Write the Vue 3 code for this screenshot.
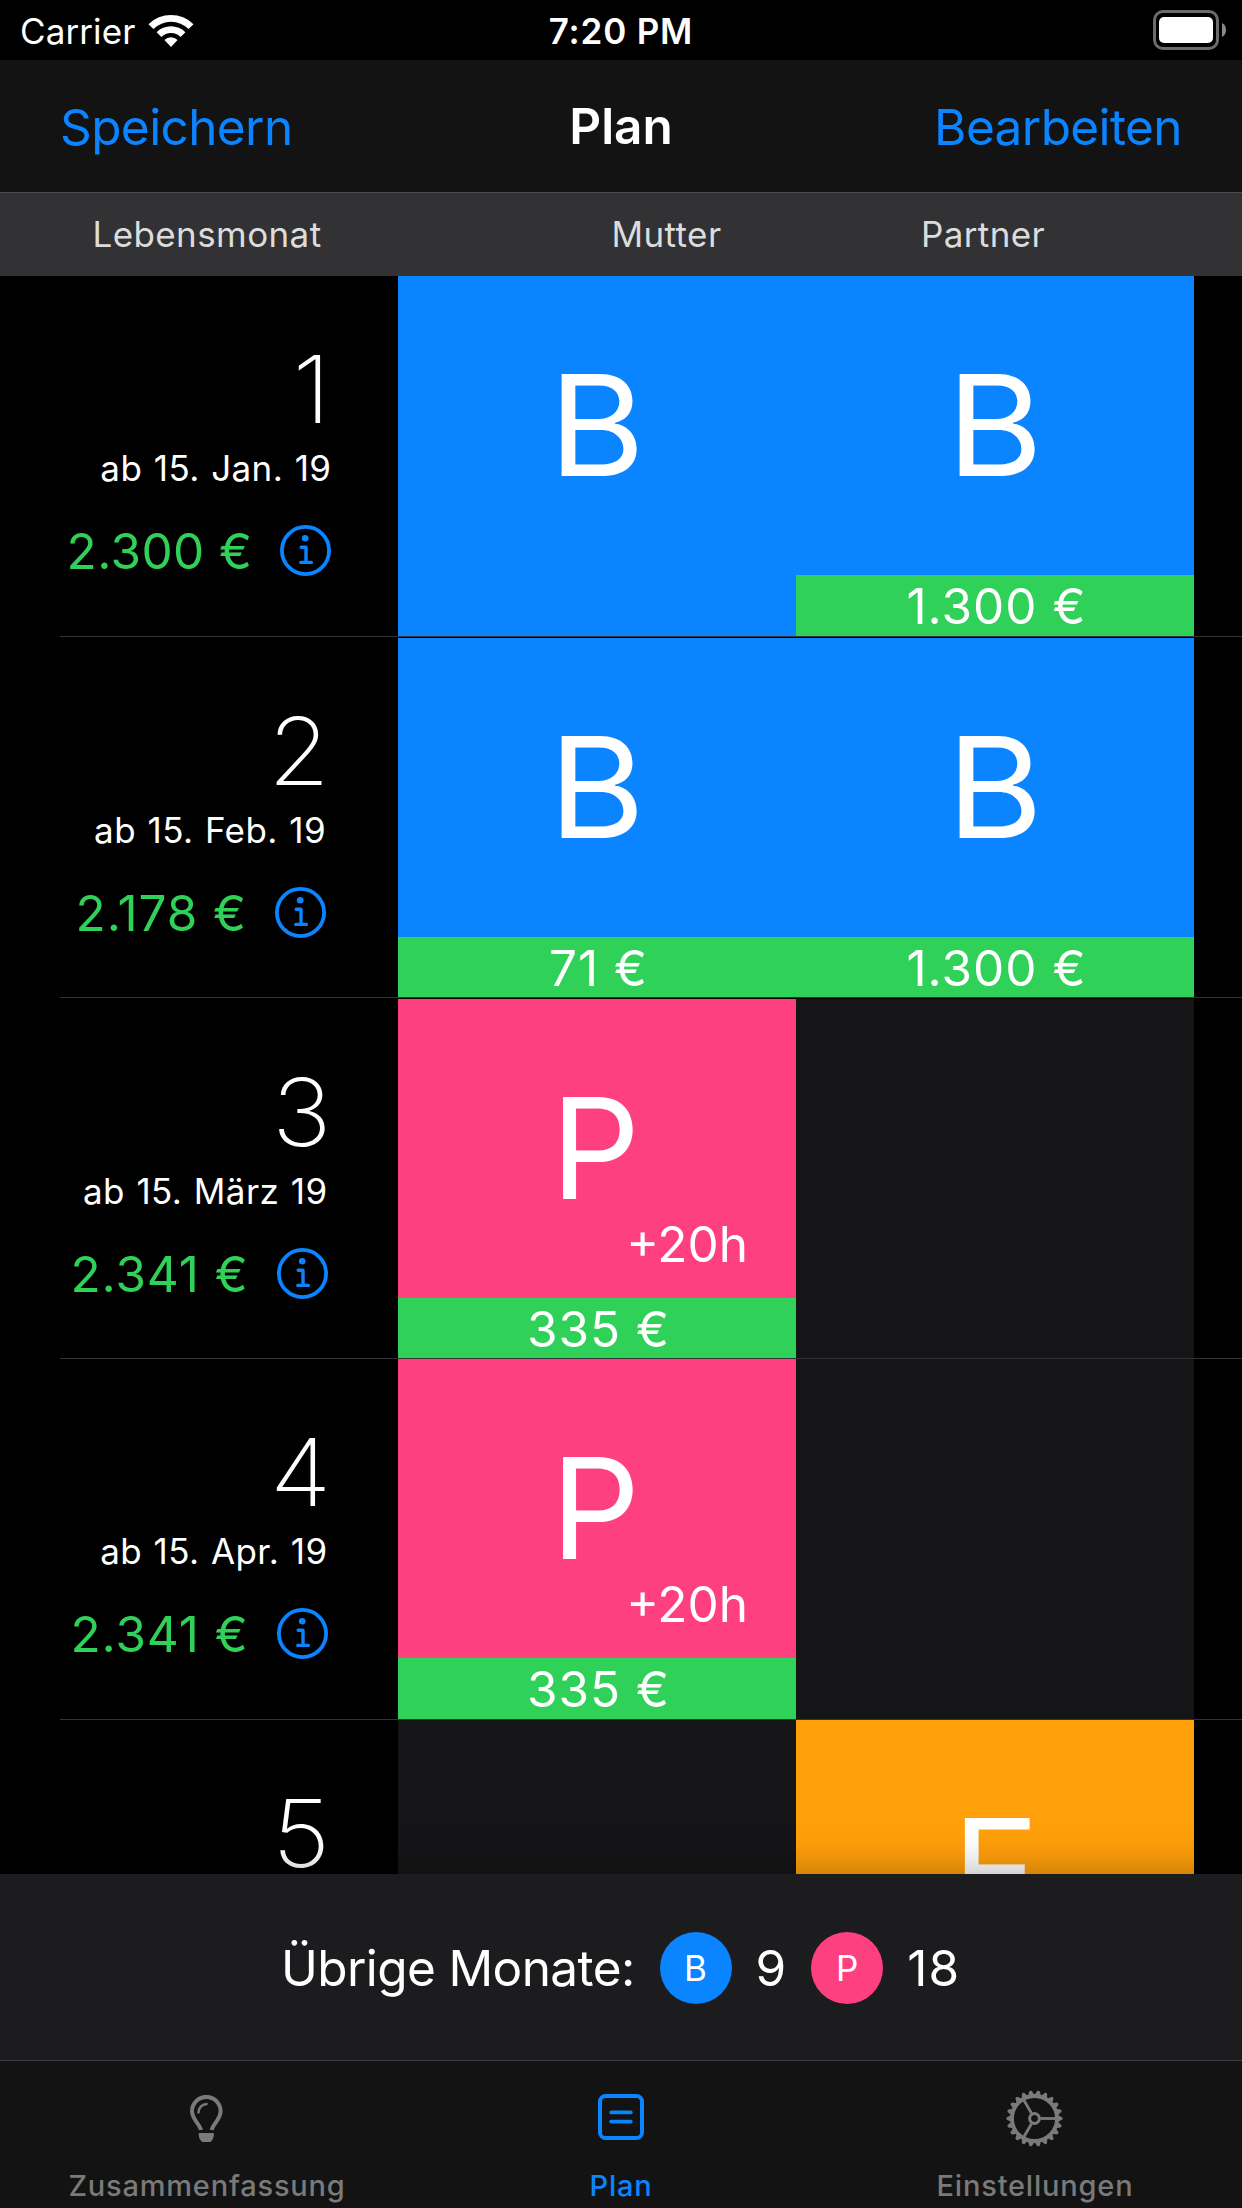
<script setup>
import { ref } from 'vue'

const months = ref([
  {
    number: 1,
    date: 'ab 15. Jan. 19',
    amount: '2.300 €',
    gap: true,
    cells: [
      { letter: 'B', type: 'basis' },
      { letter: 'B', type: 'basis', income: '1.300 €' }
    ]
  },
  {
    number: 2,
    date: 'ab 15. Feb. 19',
    amount: '2.178 €',
    gap: true,
    cells: [
      { letter: 'B', type: 'basis', income: '71 €' },
      { letter: 'B', type: 'basis', income: '1.300 €' }
    ]
  },
  {
    number: 3,
    date: 'ab 15. März 19',
    amount: '2.341 €',
    cells: [
      { letter: 'P', type: 'plus', hours: '+20h', income: '335 €' },
      { type: 'empty' }
    ]
  },
  {
    number: 4,
    date: 'ab 15. Apr. 19',
    amount: '2.341 €',
    cells: [
      { letter: 'P', type: 'plus', hours: '+20h', income: '335 €' },
      { type: 'empty' }
    ]
  },
  {
    number: 5,
    cells: [
      { type: 'empty' },
      { letter: 'F', type: 'bonus' }
    ]
  }
])

const activeTab = ref('plan')

// teeth of the settings gear
const teeth = Array.from({ length: 22 }, (_, i) => (i * 360) / 22)
</script>

<template>
  <main class="app">
    <header class="status">
      <div class="carrier">
        <span>Carrier</span>
        <svg class="wifi" viewBox="0 0 46 33">
          <path d="M0.5 10.2 A32 32 0 0 1 45.5 10.2 L40.6 15.1 A25 25 0 0 0 5.4 15.1 Z" />
          <path d="M8.6 18.2 A20.5 20.5 0 0 1 37.4 18.2 L32.6 23 A13.7 13.7 0 0 0 13.4 23 Z" />
          <path d="M16.4 26 A9.3 9.3 0 0 1 29.6 26 L23 33 Z" />
        </svg>
      </div>
      <span class="time">7:20 PM</span>
      <svg class="battery" viewBox="0 0 74 40">
        <rect x="1.5" y="1.5" width="63" height="37" rx="8.5" fill="none" stroke="#6b6b6b" stroke-width="3" />
        <rect x="6" y="7" width="54" height="26" rx="5" fill="#fff" />
        <path d="M69 13 Q73 15 73 20 Q73 25 69 27 Z" fill="#8a8a8a" />
      </svg>
    </header>

    <nav class="navbar">
      <a class="link save">Speichern</a>
      <h1>Plan</h1>
      <a class="link edit">Bearbeiten</a>
    </nav>

    <div class="columns">
      <span>Lebensmonat</span>
      <span>Mutter</span>
      <span>Partner</span>
    </div>

    <section class="list">
      <div
        v-for="month in months"
        :key="month.number"
        :class="['row', `row-${month.number}`, { gap: month.gap }]"
      >
        <div class="month">
          <div class="month-info">
            <span class="number">{{ month.number }}</span>
            <span v-if="month.date" class="date">{{ month.date }}</span>
            <div v-if="month.amount" class="amount">
              <span>{{ month.amount }}</span>
              <svg class="info" viewBox="0 0 51 51">
                <circle cx="25.5" cy="25.5" r="23.6" fill="none" stroke="currentColor" stroke-width="3.8" />
                <circle cx="25.2" cy="13.3" r="3.3" fill="currentColor" />
                <path d="M21.2 22.2 H26 V37.3 M20.8 37.4 H31.4" fill="none" stroke="currentColor" stroke-width="3.4" stroke-linecap="round" stroke-linejoin="round" />
              </svg>
            </div>
          </div>
        </div>
        <div v-for="(cell, index) in month.cells" :key="index" :class="['cell', cell.type]">
          <span v-if="cell.letter" class="letter">{{ cell.letter }}</span>
          <span v-if="cell.hours" class="hours">{{ cell.hours }}</span>
          <span v-if="cell.income" class="income">{{ cell.income }}</span>
        </div>
      </div>
    </section>

    <section class="remaining">
      <span class="remaining-label">Übrige Monate:</span>
      <span class="badge basis">B</span>
      <span class="count">9</span>
      <span class="badge plus">P</span>
      <span class="count">18</span>
    </section>

    <footer class="tabs">
      <a class="tab" :class="{ active: activeTab == 'summary' }" @click="activeTab = 'summary'">
        <svg class="bulb" viewBox="0 0 33 48">
          <path d="M10.9 35 C10 29.5 2 24 2 16.2 A14.2 14.2 0 0 1 30.6 16.2 C30.6 24 22.6 29.5 21.7 35" fill="none" stroke="currentColor" stroke-width="4" />
          <path d="M8.5 17.6 Q9 10 16.6 9" fill="none" stroke="currentColor" stroke-width="2.4" stroke-linecap="round" />
          <path d="M8.8 38 H23.8 V41 Q23.6 44 20.6 47 H12 Q9 44 8.8 41 Z" fill="currentColor" />
        </svg>
        <span>Zusammenfassung</span>
      </a>
      <a class="tab" :class="{ active: activeTab == 'plan' }" @click="activeTab = 'plan'">
        <svg class="sheet" viewBox="0 0 46 46" fill="none" stroke="currentColor" stroke-width="4">
          <rect x="2" y="2" width="42" height="42" rx="5.5" />
          <path d="M13.2 18.4 H32.8 M13.2 27.6 H32.8" stroke-linecap="round" stroke-width="3.8" />
        </svg>
        <span>Plan</span>
      </a>
      <a class="tab" :class="{ active: activeTab == 'settings' }" @click="activeTab = 'settings'">
        <svg class="gear" viewBox="-28.5 -28.5 57 57">
          <path
            v-for="angle in teeth"
            :key="angle"
            d="M23 -3.4 L27.6 -1.3 Q28.6 0 27.6 1.3 L23 3.4 Z"
            :transform="`rotate(${angle})`"
            fill="currentColor"
          />
          <g fill="none" stroke="currentColor">
            <circle r="22.5" stroke-width="3.8" />
            <circle r="4.9" stroke-width="3" />
            <path d="M6 0 H22" stroke-width="2.8" />
            <path d="M6 0 H22" stroke-width="2.8" transform="rotate(120)" />
            <path d="M6 0 H22" stroke-width="2.8" transform="rotate(240)" />
          </g>
        </svg>
        <span>Einstellungen</span>
      </a>
    </footer>
  </main>
</template>

<style>
body {
  margin: 0;
  background-color: #000;
}
</style>

<style scoped>
* {
  box-sizing: border-box;
}

.app {
  display: flex;
  flex-direction: column;
  width: 1242px;
  height: 2208px;
  overflow: hidden;
  background-color: #000;
  color: #fff;
  font-family: Inter, 'Liberation Sans', sans-serif;
  font-size: 49.5px;
  white-space: nowrap;
}

.status {
  display: grid;
  grid-template-columns: 1fr auto 1fr;
  align-items: center;
  height: 60px;
  padding: 0 15px 0 20px;
  font-size: 35px;
}

.carrier {
  display: flex;
  align-items: center;
  gap: 13px;
}

.carrier span {
  padding-top: 1px;
  letter-spacing: 0.1px;
}

.time {
  padding-top: 1px;
  margin-right: 5px;
  font-weight: 600;
  letter-spacing: 0.8px;
}

.wifi {
  width: 46px;
  height: 33px;
  fill: #fff;
}

.battery {
  width: 74px;
  height: 40px;
  justify-self: end;
}

.navbar {
  display: grid;
  grid-template-columns: 1fr auto 1fr;
  align-items: center;
  height: 133px;
  padding: 0 60px;
  background-color: #131313;
  border-bottom: 1px solid #4a4a4b;
}

.navbar h1 {
  margin: 0;
  font-size: 49.5px;
  font-weight: 600;
}

.link {
  padding-top: 2px;
  color: #0a84ff;
  letter-spacing: -0.6px;
  cursor: pointer;
}

.edit {
  justify-self: end;
}

.columns {
  display: grid;
  grid-template-columns: 414px 505px 128px;
  align-items: center;
  justify-items: center;
  height: 83px;
  padding-bottom: 2px;
  background-color: #323234;
  color: #dcdcdd;
  font-size: 35px;
  letter-spacing: 0.4px;
}

.list {
  flex: 1;
  min-height: 0;
  overflow: hidden;
}

.row {
  position: relative;
  display: grid;
  grid-template-columns: 398px 398px 398px;
  height: 361px;
}

.row::after {
  content: '';
  position: absolute;
  left: 60px;
  right: 0;
  bottom: 0;
  height: 1px;
  background-color: #333335;
}

/* rows whose divider is followed by a black hairline */
.row.gap {
  margin-bottom: 1px;
}

.row-2,
.row-3 {
  height: 360px;
}

.month {
  display: flex;
  justify-content: center;
}

.month-info {
  display: flex;
  flex-direction: column;
  align-items: flex-end;
  min-width: 254px;
  padding-top: 73px;
}

.number {
  margin-right: -4px;
  font-size: 93.5px;
  font-weight: 200;
  line-height: 80px;
  transform: scaleX(1.07);
  transform-origin: right;
}

.row-1 .number {
  margin-right: 1px;
}

.date {
  margin-top: 18px;
  font-size: 35px;
  line-height: 43px;
  letter-spacing: 0.4px;
  word-spacing: 1.3px;
}

.amount {
  display: flex;
  align-items: center;
  gap: 28px;
  margin-top: 30px;
  color: #30d158;
  line-height: 62px;
  letter-spacing: 0.9px;
}

.row-1 .amount {
  letter-spacing: 0.4px;
}

.info {
  width: 51px;
  height: 51px;
  margin-bottom: 1px;
  color: #0a84ff;
}

.cell {
  display: flex;
  flex-direction: column;
  align-items: center;
  padding-top: 84px;
}

.basis {
  background-color: #0a84ff;
}

.plus {
  background-color: #ff4080;
}

.bonus {
  background-color: #ff9f0a;
}

.empty {
  background-color: #151517;
}

.letter {
  font-size: 140px;
  line-height: 130px;
}

.basis .letter,
.bonus .letter {
  transform: scaleX(1.05);
}

.plus .letter {
  margin-left: -3px;
}

.hours {
  align-self: flex-end;
  margin-top: 1px;
  padding-right: 48px;
  line-height: 60px;
}

.income {
  align-self: stretch;
  margin-top: auto;
  height: 62px;
  padding-left: 3px;
  line-height: 63px;
  letter-spacing: 1px;
  background-color: #30d158;
  text-align: center;
}

.row-2 .income,
.row-3 .income {
  height: 61px;
}

.remaining {
  position: relative;
  display: flex;
  align-items: center;
  height: 186px;
  padding-top: 1px;
  padding-left: 281px;
  background-color: #1c1c1e;
  box-shadow: 0 0 40px rgba(0, 0, 0, 0.33);
}

.remaining-label {
  letter-spacing: -0.6px;
}

.badge {
  width: 72px;
  height: 72px;
  border-radius: 50%;
  margin-left: 25px;
  font-size: 35px;
  line-height: 72px;
  text-align: center;
}

.count {
  margin-left: 24px;
}

.count:last-child {
  letter-spacing: 1px;
}

.tabs {
  position: relative;
  display: grid;
  grid-template-columns: repeat(3, 414px);
  height: 148px;
  border-top: 1px solid #3d3d3f;
  background-color: #131313;
}

.tab {
  display: flex;
  flex-direction: column;
  align-items: center;
  color: #7a7a7a;
  font-size: 29px;
  font-weight: 500;
  line-height: 36px;
  letter-spacing: 0.8px;
  cursor: pointer;
}

.tab span {
  margin-top: auto;
  padding-bottom: 4px;
}

.tab.active {
  color: #0a84ff;
}

.bulb {
  width: 33px;
  height: 48px;
  margin-top: 34px;
  margin-right: 2px;
}

.sheet {
  width: 46px;
  height: 46px;
  margin-top: 33px;
}

.gear {
  width: 57px;
  height: 57px;
  margin-top: 29px;
  margin-right: 1px;
}
</style>
